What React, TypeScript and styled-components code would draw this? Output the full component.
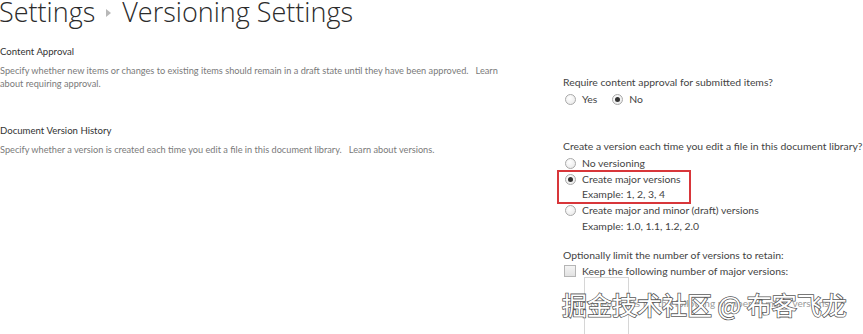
import styled, {createGlobalStyle} from "styled-components";

const GlobalStyle = createGlobalStyle`
    html, body {
        margin: 0;
        padding: 0;
        background: #ffffff;
    }
    body {
        font-family: Lato, "Open Sans", sans-serif;
        color: #444444;
    }
`;

interface IRadio {
    id: string,
    label: string,
    example?: string,
    checked?: boolean,
    highlight?: boolean
}

const versionOptions: IRadio[] = [
    {id: "none", label: "No versioning"},
    {id: "major", label: "Create major versions", example: "Example: 1, 2, 3, 4", checked: true, highlight: true},
    {id: "minor", label: "Create major and minor (draft) versions", example: "Example: 1.0, 1.1, 1.2, 2.0"},
];

export default function App() {
    return (
        <Page>
            <GlobalStyle/>
            <Title>
                <Crumb>Settings</Crumb>
                <Separator viewBox="0 0 5 8" width="5" height="8">
                    <path d="M0 0 L5 4 L0 8 Z" fill="#b8b8b8"/>
                </Separator>
                <Crumb>Versioning Settings</Crumb>
            </Title>

            <Section $top={15}>
                <Describe>
                    <Heading>Content Approval</Heading>
                    <Description>
                        Specify whether new items or changes to existing items should remain in a draft state until they have been approved.&nbsp;&nbsp; Learn about requiring approval.
                    </Description>
                </Describe>
                <Controls $offset={30}>
                    <Question>Require content approval for submitted items?</Question>
                    <InlineChoices>
                        <Choice>
                            <Radio/>
                            <span>Yes</span>
                        </Choice>
                        <Choice>
                            <Radio $checked/>
                            <span>No</span>
                        </Choice>
                    </InlineChoices>
                </Controls>
            </Section>

            <Section $top={16}>
                <Describe>
                    <Heading>Document Version History</Heading>
                    <Description>
                        Specify whether a version is created each time you edit a file in this document library.&nbsp;&nbsp; Learn about versions.
                    </Description>
                </Describe>
                <Controls $offset={15}>
                    <Question>Create a version each time you edit a file in this document library?</Question>
                    <ChoiceList>
                        {versionOptions.map((option) => {
                            const body = (
                                <OptionRow key={option.id} $tight={option.highlight}>
                                    <Radio $checked={option.checked}/>
                                    <div>
                                        <OptionLabel>{option.label}</OptionLabel>
                                        {option.example && <OptionLabel>{option.example}</OptionLabel>}
                                    </div>
                                </OptionRow>
                            );
                            return option.highlight ? (
                                <Highlight key={option.id}>{body}</Highlight>
                            ) : body;
                        })}
                    </ChoiceList>

                    <Question $gap={13}>Optionally limit the number of versions to retain:</Question>
                    <CheckRow>
                        <Checkbox/>
                        <span>Keep the following number of major versions:</span>
                    </CheckRow>
                    <LimitArea>
                        <NumberBox/>
                        <DraftsRow>Keep drafts for the following number of major versions:</DraftsRow>
                    </LimitArea>
                </Controls>
            </Section>

            <Watermark>掘金技术社区 @ 布客飞龙</Watermark>
        </Page>
    );
}

const Page = styled.main`
    position: relative;
    width: 863px;
    height: 334px;
    overflow: hidden;
`;

const Title = styled.h1`
    display: flex;
    align-items: center;
    gap: 11px;
    margin: -5px 0 0 -1px;
    font-family: "Open Sans", sans-serif;
    font-size: 27px;
    font-weight: 300;
    line-height: 34px;
    color: #2b2b2b;
`;

const Crumb = styled.span`
    white-space: nowrap;
`;

const Separator = styled.svg`
    display: block;
    margin-top: 1px;
`;

const Section = styled.section<{$top: number}>`
    display: grid;
    grid-template-columns: 563px 1fr;
    margin-top: ${(p) => p.$top}px;
`;

const Describe = styled.div`
    max-width: 505px;
`;

const Heading = styled.h2`
    margin: 0 0 4px;
    font-size: 9.6px;
    font-weight: 400;
    line-height: 16px;
    color: #333333;
`;

const Description = styled.p`
    margin: 0;
    font-size: 9.2px;
    line-height: 13px;
    color: #7a7a7a;
`;

const Controls = styled.div<{$offset: number}>`
    padding-top: ${(p) => p.$offset}px;
    font-size: 10.4px;
    line-height: 16px;
    color: #444444;
`;

const Question = styled.div<{$gap?: number}>`
    margin-top: ${(p) => p.$gap || 0}px;
    white-space: nowrap;
`;

const InlineChoices = styled.div`
    display: flex;
    gap: 15px;
    margin-top: 1px;
    padding-left: 2px;
`;

const Choice = styled.label`
    display: flex;
    align-items: center;
    gap: 6px;
`;

const Radio = styled.span<{$checked?: boolean}>`
    position: relative;
    flex: none;
    width: 9px;
    height: 9px;
    border: 1px solid #a9a9a9;
    border-radius: 50%;
    background: radial-gradient(circle at 40% 35%, #ffffff 0%, #e6e6e6 100%);

    &::after {
        content: "";
        display: ${(p) => (p.$checked ? "block" : "none")};
        position: absolute;
        left: 2px;
        top: 2px;
        width: 5px;
        height: 5px;
        border-radius: 50%;
        background: #333333;
    }
`;

const ChoiceList = styled.div`
    display: flex;
    flex-direction: column;
    margin-top: 1px;
`;

const OptionRow = styled.div<{$tight?: boolean}>`
    display: flex;
    align-items: flex-start;
    gap: 6px;
    padding-left: 2px;
    line-height: ${(p) => (p.$tight ? 15 : 16)}px;

    & > ${Radio} {
        margin-top: ${(p) => (p.$tight ? 2 : 3)}px;
    }
`;

const OptionLabel = styled.div`
    white-space: nowrap;
`;

const Highlight = styled.div`
    width: 134px;
    box-sizing: border-box;
    margin: -1px 0 -2px -6px;
    padding: 0 0 0 4px;
    border: 2px solid #d8363a;
`;

const CheckRow = styled.label`
    display: flex;
    align-items: center;
    gap: 6px;
    padding-left: 1px;
`;

const Checkbox = styled.span`
    flex: none;
    width: 10px;
    height: 10px;
    border: 1px solid #b5b5b5;
    background: linear-gradient(#f4f4f4, #e2e2e2);
`;

const LimitArea = styled.div`
    display: grid;
    margin: -2px 0 0 21px;
`;

const NumberBox = styled.div`
    grid-area: 1 / 1;
    width: 45px;
    height: 62px;
    box-sizing: border-box;
    border: 1px solid #d6d6d6;
`;

const DraftsRow = styled.div`
    grid-area: 1 / 1;
    margin: 19px 0 0 6px;
    font-size: 10px;
    line-height: 14px;
    color: #9a9a9a;
    white-space: nowrap;
`;

const Watermark = styled.div`
    position: absolute;
    left: 562px;
    top: 287px;
    font-family: "Noto Sans CJK SC", sans-serif;
    font-size: 25px;
    line-height: 34px;
    color: #ffffff;
    -webkit-text-stroke: 1.6px #5a5a5a;
    paint-order: stroke fill;
    white-space: nowrap;
`;
